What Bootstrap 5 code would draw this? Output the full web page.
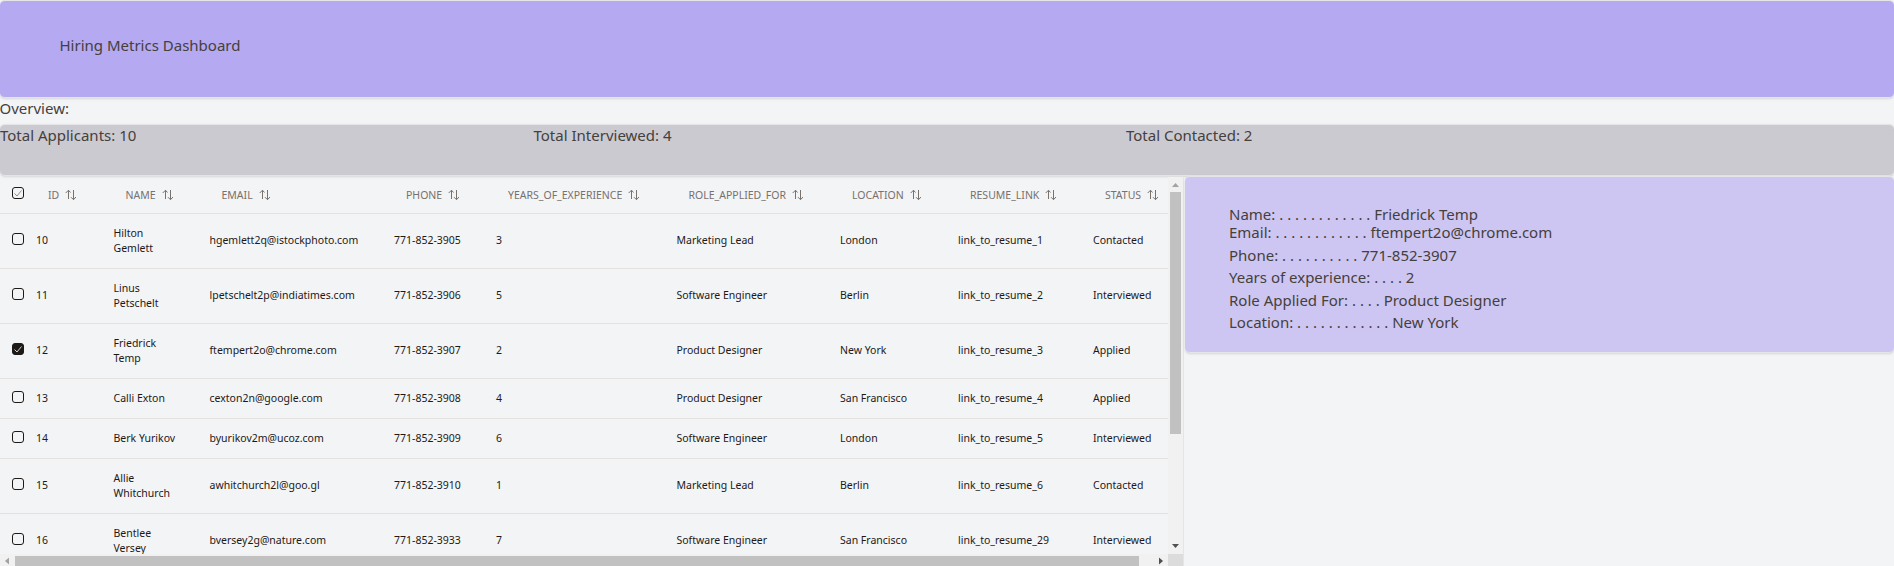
<!DOCTYPE html>
<html lang="en">
<head>
<meta charset="utf-8">
<meta name="viewport" content="width=device-width, initial-scale=1">
<title>Hiring Metrics Dashboard</title>
<link href="https://cdn.jsdelivr.net/npm/bootstrap@5.3.0/dist/css/bootstrap.min.css" rel="stylesheet">
<style>
body{background:#f3f4f6;color:#44403c;font:15px/24px "Noto Sans",sans-serif;height:566px;overflow:hidden}
.panel{border:solid #e5e5e8;border-width:1px 0;border-radius:5px;box-shadow:0 1px 3px rgba(0,0,0,.1),0 1px 2px -1px rgba(0,0,0,.1)}
.banner{background:#b5a9f2;height:98px;padding:32px 59.500px}
.overview{height:26px;line-height:20px;margin-left:-.5px}
.totals{background:#cccad1;height:52px;line-height:20px;display:grid;grid-template-columns:533.500px 592.500px 1fr}
.workspace{margin-top:1px}
.applicants{width:1184px;height:394px;flex:none;border-right:1px solid #e5e5e8;display:grid;grid-template:377px 17px / 1168px 15px}
.viewport{overflow:hidden}
.grid-table{table-layout:fixed;width:1183px;border-collapse:separate;border-spacing:0;font-size:10.500px;line-height:15px;color:#1c1917}
.grid-table th,.grid-table td{padding:0 12px 0 0;border-bottom:1px solid #e3e2e1;vertical-align:middle}
.grid-table th{height:37px;color:#78716c;font-weight:400;padding:0 0 0 12px;white-space:nowrap}
.grid-table td{height:55px;padding-bottom:1px}
.grid-table tr.one td{height:40px}
.grid-table th.pick{padding:0 0 4px 12px}
.grid-table td.pick{padding:0 0 4px 12px}
.tick{display:block;width:12px;height:12px;border:1px solid #1c1917;border-radius:3px}
.tick svg{display:block;width:10px;height:10px;fill:none;stroke:#78716c;stroke-width:.8}
.tick.on{background:#1c1917}
.tick.on svg{stroke:#fff}
.sort{width:11px;height:12px;margin-left:6px;fill:none;stroke:#78716c;stroke-width:1;vertical-align:-2px}
.track{background:#f1f1f1}
.thumb{background:#c1c1c1}
.track svg{display:block}
.corner{background:#dcdcdc}
.detail{background:#cec6f2;height:177px;padding:26px 44px 0;margin-left:1px;margin-top:-1px}
.detail div{height:22px;line-height:22px;white-space:pre}
.detail .first{height:18px}
.detail .gap-after{height:23px}
</style>
</head>
<body>
<header class="panel banner">Hiring Metrics Dashboard</header>
<div class="overview">Overview:</div>
<section class="panel totals"><span>Total Applicants: 10</span><span>Total Interviewed: 4</span><span>Total Contacted: 2</span></section>
<main class="workspace d-flex">
<div class="applicants">
<div class="viewport">
<table class="grid-table">
<colgroup id="cols"></colgroup>
<thead><tr id="head"></tr></thead>
<tbody id="rows"></tbody>
</table>
</div>
<div class="track d-flex flex-column align-items-center">
<svg width="15" height="15"><path d="M4 10h7L7.500 6z" fill="#a3a3a3"/></svg>
<div class="thumb" style="width:11px;height:242px"></div>
<svg class="mt-auto" width="15" height="15"><path d="M4 5h7L7.500 9z" fill="#505050"/></svg>
</div>
<div class="track d-flex">
<svg width="15" height="15"><path d="M9 3.500v7L5 7z" fill="#a3a3a3"/></svg>
<div class="thumb" style="width:1124px;height:15px;margin-top:2px"></div>
<svg class="ms-auto" width="15" height="15"><path d="M6 3.500v7L10 7z" fill="#505050"/></svg>
</div>
<div class="corner"></div>
</div>
<aside class="panel detail flex-grow-1"><div class="first">Name: . . . . . . . . . . . . Friedrick Temp</div><div class="gap-after">Email: . . . . . . . . . . . . ftempert2o@chrome.com</div><div>Phone: . . . . . . . . . . 771-852-3907</div><div class="gap-after">Years of experience: . . . . 2</div><div>Role Applied For: . . . . Product Designer</div><div>Location: . . . . . . . . . . . . New York</div></aside>
</main>
<script src="https://cdn.jsdelivr.net/npm/bootstrap@5.3.0/dist/js/bootstrap.bundle.min.js"></script>
<script>
const check = '<svg viewBox="0 0 10 10"><path d="M1.500 5.500 4 8 8.500 2.500"/></svg>';
const sort = '<svg class="sort" viewBox="0 0 11 12"><path d="M3.500 10V1.500M.7 4 3.500 1.200 5.500 3.500M8.500 1v9.500M6 8.200l2.500 2.500L11 8"/></svg>';
const widths = [36, 77.500, 96, 184.500, 102, 180.500, 163.500, 118, 135, 90];
const names = ['ID','NAME','EMAIL','PHONE','YEARS_OF_EXPERIENCE','ROLE_APPLIED_FOR','LOCATION','RESUME_LINK','STATUS'];
const data = [
 ['10','Hilton<br>Gemlett','hgemlett2q@istockphoto.com','771-852-3905','3','Marketing Lead','London','link_to_resume_1','Contacted'],
 ['11','Linus<br>Petschelt','lpetschelt2p@indiatimes.com','771-852-3906','5','Software Engineer','Berlin','link_to_resume_2','Interviewed'],
 ['12','Friedrick<br>Temp','ftempert2o@chrome.com','771-852-3907','2','Product Designer','New York','link_to_resume_3','Applied'],
 ['13','Calli Exton','cexton2n@google.com','771-852-3908','4','Product Designer','San Francisco','link_to_resume_4','Applied'],
 ['14','Berk Yurikov','byurikov2m@ucoz.com','771-852-3909','6','Software Engineer','London','link_to_resume_5','Interviewed'],
 ['15','Allie<br>Whitchurch','awhitchurch2l@goo.gl','771-852-3910','1','Marketing Lead','Berlin','link_to_resume_6','Contacted'],
 ['16','Bentlee<br>Versey','bversey2g@nature.com','771-852-3933','7','Software Engineer','San Francisco','link_to_resume_29','Interviewed']];
document.getElementById('cols').innerHTML = widths.map(w => `<col style="width:${w}px">`).join('');
document.getElementById('head').innerHTML = `<th class="pick"><span class="tick">${check}</span></th>` + names.map(n => `<th>${n}${sort}</th>`).join('');
document.getElementById('rows').innerHTML = data.map(r =>
 `<tr class="${r[1].includes('<br>') ? '' : 'one'}"><td class="pick"><span class="tick ${r[0] === '12' ? 'on' : ''}">${r[0] === '12' ? check : ''}</span></td>` + r.map(c => `<td>${c}</td>`).join('') + '</tr>').join('');
</script>
</body>
</html>
